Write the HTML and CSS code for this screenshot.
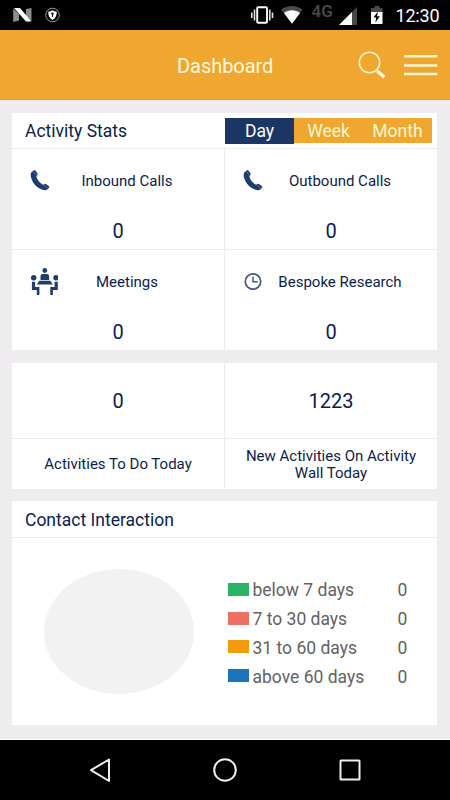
FILE: index.html
```html
<!DOCTYPE html>
<html lang="en">
<head>
<meta charset="utf-8">
<title>Dashboard</title>
<link rel="stylesheet" href="styles.css">
</head>
<body>
<div class="status">
  <svg class="status-left" width="60" height="30" viewBox="0 0 60 30">
    <path d="M13.2 8.5L19 14v6.5L13.2 22zM31.5 8v13L26 16V9z" fill="#8c8c8c"/>
    <path d="M14 8h6l11.5 13.500H26z" fill="#fff"/>
    <circle cx="52.500" cy="15" r="6.800" fill="none" stroke="#999" stroke-width="1"/>
    <path d="M52.500 10.300c1.500 1 3 1.200 4.300 1.200 0 4-1 6.800-4.300 8.600-3.300-1.800-4.300-4.600-4.300-8.600 1.300 0 2.800-.2 4.300-1.200z" fill="#fff"/>
    <circle cx="52.500" cy="13.800" r="1.200" fill="#111"/><path d="M52.500 14v3" stroke="#111"/>
  </svg>
  <svg class="status-right" width="140" height="30" viewBox="248 0 140 30">
    <rect x="257.200" y="7.300" width="9.800" height="15.400" rx="1" fill="none" stroke="#fff" stroke-width="1.900"/>
    <path d="M254.500 9.500v11M251.800 12.500v5.500M269.800 9.500v11M272.500 12.500v5.500" stroke="#ddd" stroke-width="1.600"/>
    <path d="M281 9.800c6-5 15.500-5 21.500 0L292 23.500z" fill="#4a4a4a"/>
    <path d="M284 13c4.500-3.600 11.500-3.600 16 0l-8 10.800z" fill="#fff"/>
    <text class="network" x="311.500" y="16.800">4G</text>
    <path d="M357 7v18h-18z" fill="#484848"/>
    <path d="M352 12v13h-13z" fill="#fff"/>
    <path d="M374.500 6h5v2h3v4h-11.500V8h3.500z" fill="#4a4a4a"/>
    <path d="M371 12h11.500v12H371z" fill="#fff"/>
    <path d="M377.800 11.500l-4.300 6h2.700l-.8 5 4.400-6.300h-2.700z" fill="#000"/>
  </svg>
  <span class="clock">12:30</span>
</div>
<header class="header">
  <h1>Dashboard</h1>
  <svg class="header-icons" width="82" height="32" viewBox="356 49 82 32">
    <circle cx="369.500" cy="62.500" r="10.200" fill="none" stroke="#fff3c4" stroke-width="1.600"/>
    <path d="M376.500 70l1.500 1.500" stroke="#fff3c4" stroke-width="2"/>
    <path d="M377.500 71l6.800 6.200" stroke="#fffbe8" stroke-width="3.200"/>
    <path d="M404 56.200h33.500M404 65.500h33.500M404 74h33.500" stroke="#fff7cf" stroke-width="2.400"/>
  </svg>
</header>
<main class="content">
  <section class="card stats">
    <div class="card-head">
      <h2>Activity Stats</h2>
      <div class="tabs"><span class="tab active">Day</span><span class="tab">Week</span><span class="tab">Month</span></div>
    </div>
    <div class="grid">
      <div class="cell">
        <div class="label-row">
          <svg class="icon" width="30" height="30" viewBox="0 0 30 30"><path class="phone" d="M3.700 6L6 4.300q.8-.5 1.400.3l2.100 3q.4.800-.2 1.400L8.400 10.300c.4 3.100 3.800 7.300 6.700 8.500l1.500-.9q.7-.5 1.400 0l2.900 2.400q.8.700.1 1.400l-1.700 1.800c-1.100 1.100-3.500.9-5.300.1C8.500 21.700 3.800 16.200 2.800 10.200 2.500 8.300 2.700 6.900 3.700 6z"/><path class="shine" d="M5.400 5.500l3 3.900M15.800 18.700l3.800 3.700"/></svg>
          <span class="label">Inbound Calls</span>
        </div>
        <div class="value">0</div>
      </div>
      <div class="cell">
        <div class="label-row">
          <svg class="icon" width="30" height="30" viewBox="0 0 30 30"><path class="phone" d="M3.700 6L6 4.300q.8-.5 1.400.3l2.100 3q.4.800-.2 1.400L8.400 10.300c.4 3.100 3.800 7.300 6.700 8.500l1.500-.9q.7-.5 1.400 0l2.900 2.400q.8.700.1 1.400l-1.700 1.800c-1.100 1.100-3.500.9-5.300.1C8.500 21.700 3.800 16.200 2.800 10.200 2.500 8.300 2.700 6.900 3.700 6z"/><path class="shine" d="M5.400 5.500l3 3.900M15.800 18.700l3.800 3.700"/></svg>
          <span class="label">Outbound Calls</span>
        </div>
        <div class="value">0</div>
      </div>
      <div class="cell">
        <div class="label-row">
          <svg class="icon" width="30" height="30" viewBox="0 0 30 30">
            <g fill="#1d3d6d"><circle cx="16.800" cy="3.500" r="2.400"/><circle cx="5.700" cy="10.800" r="2.700"/><circle cx="28" cy="10.800" r="2.700"/>
            <path d="M12.500 13V9.200q0-2.200 2.200-2.200h4.200q2.200 0 2.200 2.200V13zM11.300 13.700h11l2.500 3.700H8.800z"/>
            <path d="M3.900 14.700h3.200v5.300h4.300v8.100H8.800v-5.200H3.900zM29.800 14.700h-3.200v5.300h-4.300v8.100h2.600v-5.200h4.900z"/></g>
          </svg>
          <span class="label">Meetings</span>
        </div>
        <div class="value">0</div>
      </div>
      <div class="cell">
        <div class="label-row">
          <svg class="icon" width="30" height="30" viewBox="0 0 30 30"><circle cx="12" cy="14.500" r="7.700" fill="none" stroke="#40577f" stroke-width="1.700"/><path d="M12 9.800v5h4.800" fill="none" stroke="#40577f" stroke-width="1.500"/></svg>
          <span class="label">Bespoke Research</span>
        </div>
        <div class="value">0</div>
      </div>
    </div>
  </section>
  <section class="card summary">
    <div class="grid">
      <div class="count">0</div>
      <div class="count">1223</div>
      <div class="caption">Activities To Do Today</div>
      <div class="caption">New Activities On Activity<br>Wall Today</div>
    </div>
  </section>
  <section class="card contact">
    <div class="card-head"><h2>Contact Interaction</h2></div>
    <div class="chart-row">
      <div class="pie"></div>
      <ul class="legend">
        <li><i class="swatch green"></i><span class="range">below 7 days</span><span>0</span></li>
        <li><i class="swatch red"></i><span class="range">7 to 30 days</span><span>0</span></li>
        <li><i class="swatch orange"></i><span class="range">31 to 60 days</span><span>0</span></li>
        <li><i class="swatch blue"></i><span class="range">above 60 days</span><span>0</span></li>
      </ul>
    </div>
  </section>
</main>
<nav class="navbar">
  <svg width="24" height="26" viewBox="88 757 24 26"><path d="M109 759.500v21.500l-18-10.800z"/></svg>
  <svg width="26" height="26" viewBox="212 757 26 26"><circle cx="225" cy="770" r="10.800"/></svg>
  <svg width="24" height="26" viewBox="338 757 24 26"><rect x="340.500" y="760.500" width="19" height="19" rx=".5"/></svg>
</nav>
</body>
</html>
```

FILE: styles.css
```css
* { box-sizing: border-box; }
body { margin: 0; width: 450px; height: 800px; display: flex; flex-direction: column; overflow: hidden; background: #eeecee; font-family: Roboto, "Liberation Sans", sans-serif; color: #0b1d4d; }
h1, h2 { margin: 0; font-weight: 400; }
svg { display: block; flex: none; }
.status { height: 30px; flex: none; display: flex; background: #000; }
.status-right { margin-left: 188px; }
.network { font: 500 17px Roboto, sans-serif; fill: #4c4c4c; }
.clock { margin-left: 7.500px; color: #fff; font-size: 18px; line-height: 31px; letter-spacing: -.2px; white-space: nowrap; font-weight: 400; }
.header { height: 70px; flex: none; display: flex; align-items: center; background: #efa730; border-bottom: 1px solid #e79b20; }
.header h1 { width: 96px; margin-left: 177px; font-size: 20px; line-height: 24px; letter-spacing: -.05px; color: #fff9dc; white-space: nowrap; padding-top: 2px; }
.header-icons { margin-left: 83px; }
.content { flex: 1; padding: 12.500px 13px 0 12px; display: flex; flex-direction: column; gap: 12.500px; border-bottom: 1px solid #fff; }
.card { background: #fff; }
.card-head { display: flex; justify-content: space-between; height: 36px; border-bottom: 1px solid #ededed; padding: 5px 5px 0 13px; }
h2 { font-size: 17.500px; line-height: 26px; white-space: nowrap; }
.tabs { display: grid; grid-template-columns: repeat(3, 69px); height: 25px; background: #efa730; }
.tab { color: #fff6d2; font-size: 17.500px; line-height: 26px; text-align: center; }
.tab.active { background: #1b3564; color: #fff; }
.grid { display: grid; grid-template-columns: 213px 212px; }
.grid > :nth-child(odd) { border-right: 1px solid #ededed; }
.stats { height: 237.500px; }
.cell { height: 101px; padding-top: 17px; }
.cell:nth-child(-n+2) { border-bottom: 1px solid #ededed; }
.label-row { display: flex; height: 30px; align-items: center; }
.icon { margin-left: 16px; }
.label { flex: 1; text-align: center; font-size: 15px; line-height: 20px; white-space: nowrap; padding-right: 28px; }
.value { text-align: center; font-size: 20px; line-height: 24px; margin-top: 23px; }
.summary { height: 126px; }
.count { height: 76px; line-height: 76px; text-align: center; font-size: 20px; border-bottom: 1px solid #ededed; }
.caption { height: 50px; padding-top: 3px; display: grid; place-content: center; text-align: center; font-size: 15px; line-height: 17.500px; white-space: nowrap; }
.contact { height: 224px; }
.contact .card-head { height: 37px; padding-top: 6px; }
.chart-row { display: flex; }
.pie { width: 150px; height: 125px; border-radius: 50%; background: #f2f2f2; margin: 31px 0 0 32px; }
.legend { list-style: none; margin: 38px 0 0 33.500px; padding: 0; color: #626262; font-size: 17.500px; }
.legend li { display: flex; height: 28.800px; align-items: center; }
.swatch { width: 21px; height: 13px; margin: -2px 4px 0 0; }
.range { width: 145px; white-space: nowrap; }
.green { background: #28b464; }
.red { background: #ec7063; }
.orange { background: #f39c0b; }
.blue { background: #1c75bc; }
.navbar { height: 60px; flex: none; display: flex; justify-content: space-between; align-items: center; padding: 0 88px; background: #000; }
.navbar svg { fill: none; stroke: #eee; stroke-width: 2; stroke-linejoin: round; }
.phone { fill: #1d3d6d; }
.shine { stroke: #7189aa; stroke-width: .7; }
```
